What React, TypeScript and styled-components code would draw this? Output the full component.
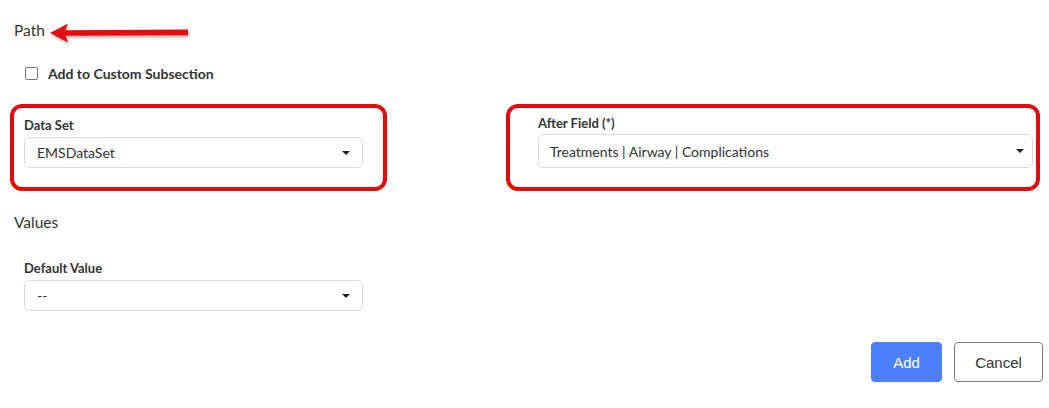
import React from "react";
import styled, { createGlobalStyle } from "styled-components";

const Global = createGlobalStyle`
  html, body { margin: 0; padding: 0; background: #fff; }
  body { font-family: Lato, "Open Sans", sans-serif; color: #333; }
  * { box-sizing: border-box; }
`;

const Page = styled.div`
  width: 1049px;
  height: 408px;
  padding: 21px 6px 0 14px;
`;

const SectionTitle = styled.div<{ $mt?: number }>`
  display: flex;
  align-items: flex-start;
  gap: 5px;
  font-size: 15.5px;
  line-height: 18px;
  height: 18px;
  color: #333;
  margin-top: ${(p) => p.$mt ?? 0}px;
`;

const ArrowSvg = styled.svg`
  margin-top: 2px;
  overflow: visible;
  flex: none;
`;

const CheckRow = styled.label`
  display: flex;
  align-items: center;
  gap: 10px;
  margin: 26px 0 0 11px;
  font-size: 14px;
  font-weight: 700;
  line-height: 17px;
  color: #333;
`;

const Box = styled.span`
  width: 13px;
  height: 13px;
  border: 1px solid #767676;
  border-radius: 2px;
  background: #fff;
`;

const FieldsRow = styled.div`
  display: flex;
  margin: 22px 0 0 -4px;
  gap: 119px;
`;

const Annotated = styled.div<{ $w: number; $pt: number; $pl: number; $pr: number }>`
  width: ${(p) => p.$w}px;
  height: 87px;
  border: 4px solid #e20a0a;
  border-radius: 12px;
  padding: ${(p) => p.$pt}px ${(p) => p.$pr}px 0 ${(p) => p.$pl}px;
`;

const Field = styled.div<{ $gap: number }>`
  display: flex;
  flex-direction: column;
  gap: ${(p) => p.$gap}px;
`;

const Label = styled.div`
  font-size: 13px;
  font-weight: 700;
  line-height: 16px;
  color: #333;
`;

const Select = styled.div<{ $h: number; $w?: number; $pl?: number; $pr?: number }>`
  display: flex;
  align-items: center;
  justify-content: space-between;
  height: ${(p) => p.$h}px;
  width: ${(p) => (p.$w ? `${p.$w}px` : "100%")};
  border: 1px solid #dcdcdc;
  border-radius: 5px;
  padding: 0 ${(p) => p.$pr ?? 12}px 0 ${(p) => p.$pl ?? 12}px;
  font-size: 14px;
  color: #333;
  background: #fff;
`;

const Caret = styled.span`
  width: 0;
  height: 0;
  border-left: 4px solid transparent;
  border-right: 4px solid transparent;
  border-top: 4px solid #222;
`;

const PlainField = styled(Field)`
  margin: 29px 0 0 10px;
`;

const Actions = styled.div`
  display: flex;
  justify-content: flex-end;
  gap: 12px;
  margin-top: 31px;
`;

const Button = styled.button<{ $primary?: boolean }>`
  height: 40px;
  padding: 0;
  width: ${(p) => (p.$primary ? 71 : 89)}px;
  border-radius: 4px;
  font-family: "Liberation Sans", Arial, sans-serif;
  font-size: 15px;
  border: 1px solid ${(p) => (p.$primary ? "#4d7ffc" : "#7a7a7a")};
  background: ${(p) => (p.$primary ? "#4d7ffc" : "#fff")};
  color: ${(p) => (p.$primary ? "#fff" : "#333")};
`;

const Arrow = () => (
  <ArrowSvg width="140" height="20" viewBox="0 0 140 20">
    <defs>
      <filter id="sh" x="-10%" y="-60%" width="120%" height="220%">
        <feDropShadow dx="1" dy="2" stdDeviation="1.5" floodColor="#000" floodOpacity="0.3" />
      </filter>
    </defs>
    <polygon
      filter="url(#sh)"
      fill="#e20a0a"
      points="0,10 18,0.5 15.5,7.3 138,6.6 138,12.2 15.5,12.7 18,19.5"
    />
  </ArrowSvg>
);

export default function App() {
  return (
    <Page>
      <Global />
      <SectionTitle>
        Path
        <Arrow />
      </SectionTitle>
      <CheckRow>
        <Box />
        Add to Custom Subsection
      </CheckRow>
      <FieldsRow>
        <Annotated $w={377} $pt={9} $pl={10} $pr={20}>
          <Field $gap={4}>
            <Label>Data Set</Label>
            <Select $h={31}>
              EMSDataSet
              <Caret />
            </Select>
          </Field>
        </Annotated>
        <Annotated $w={534} $pt={7} $pl={28} $pr={3}>
          <Field $gap={3}>
            <Label>After Field (*)</Label>
            <Select $h={34} $pl={11} $pr={8}>
              Treatments | Airway | Complications
              <Caret />
            </Select>
          </Field>
        </Annotated>
      </FieldsRow>
      <SectionTitle $mt={22}>Values</SectionTitle>
      <PlainField $gap={4}>
        <Label>Default Value</Label>
        <Select $h={31} $w={339}>
          --
          <Caret />
        </Select>
      </PlainField>
      <Actions>
        <Button $primary>Add</Button>
        <Button>Cancel</Button>
      </Actions>
    </Page>
  );
}
